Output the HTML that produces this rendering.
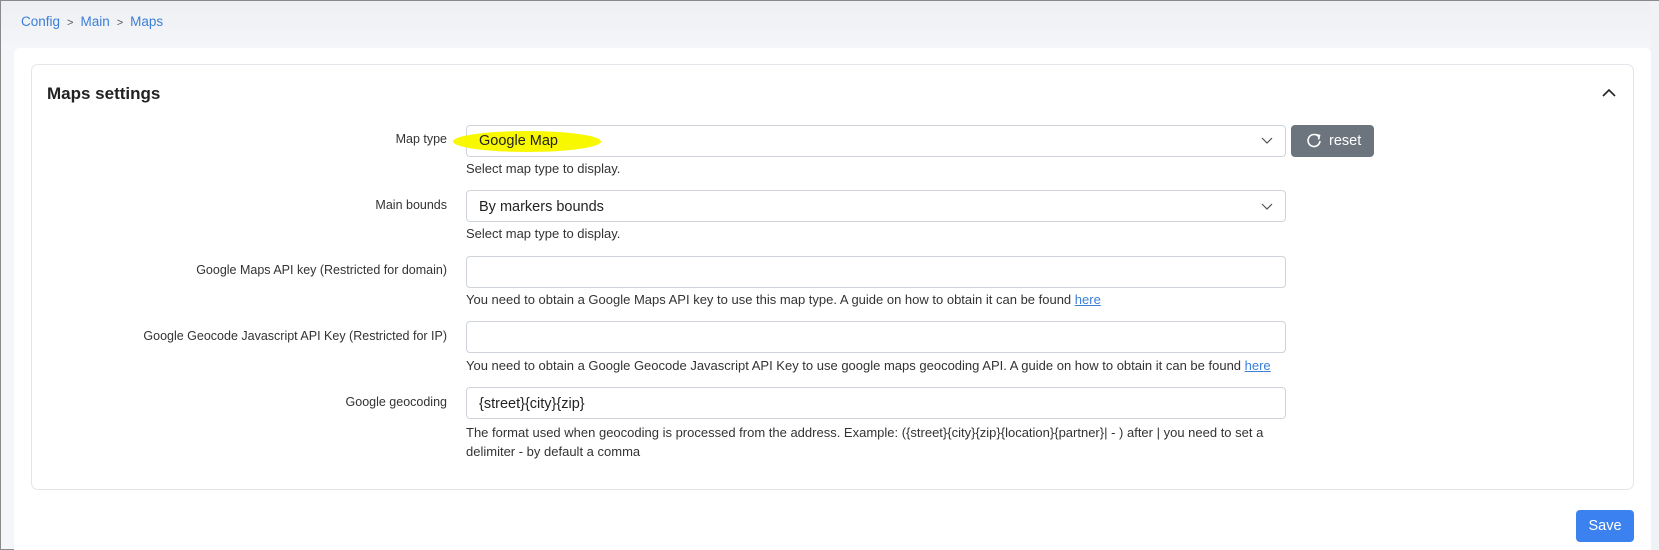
<!DOCTYPE html>
<html><head><meta charset="utf-8"><style>
*{box-sizing:border-box;margin:0;padding:0}
html,body{width:1659px;height:550px;overflow:hidden}
body{font-family:"Liberation Sans",sans-serif;background:linear-gradient(#eeeff3,#f5f6f9 50px);border:1px solid #8a8a8a;position:relative;color:#222}
.bc{position:absolute;left:20px;top:13px;font-size:13.5px;color:#3b7fd9}
.bc span.s{color:#555;margin:0 7px;font-size:11px}
.outer{position:absolute;left:13px;top:47px;width:1637px;height:510px;background:#fff;border-radius:6px}
.strip{position:absolute;left:1650px;top:0;width:8px;height:550px;background:#f1f2f5}
.card{position:absolute;left:30px;top:63px;width:1603px;height:426px;border:1px solid #e3e5ea;border-radius:7px;background:#fff}
.title{position:absolute;left:46px;top:83px;font-size:17px;font-weight:bold;color:#222}
.lbl{position:absolute;right:1211px;font-size:12.5px;color:#333;text-align:right;white-space:nowrap}
.inp{position:absolute;left:465px;width:820px;height:32px;border:1px solid #cfd4db;border-radius:4px;background:#fff;font-size:14.5px;color:#222;padding:8px 12px}
.help{position:absolute;left:465px;font-size:13px;color:#333;white-space:nowrap;line-height:19px}
.help a{color:#3b7fd9;text-decoration:underline}
.reset{position:absolute;left:1290px;top:124px;width:83px;height:32px;background:#6c757d;border-radius:4px;color:#fff;font-size:14.5px;padding:8px 0 0 38px}
.save{position:absolute;left:1575px;top:509px;width:58px;height:32px;background:#3b82f0;border-radius:4px;color:#fff;font-size:14.5px;text-align:center;line-height:32px}
.hl{position:absolute;left:452px;top:130px;width:148px;height:21px;border-radius:50%;background:#f8f800}
</style></head><body>
<div class="bc">Config<span class="s">&gt;</span>Main<span class="s">&gt;</span>Maps</div>
<div class="strip"></div>
<div class="outer"></div>
<div class="card"></div>
<div class="title">Maps settings</div>
<svg style="position:absolute;left:1601px;top:87px" width="14" height="10"><path d="M1 8 L7 2 L13 8" stroke="#222" stroke-width="1.6" fill="none"/></svg>

<div class="lbl" style="top:131px">Map type</div>
<div class="inp" style="top:124px"></div>
<div class="hl"></div>
<div style="position:absolute;left:478px;top:132px;font-size:14.5px;color:#222">Google Map</div>
<svg style="position:absolute;left:1260px;top:136px" width="12" height="8"><path d="M1 1 L6 6 L11 1" stroke="#555" stroke-width="1.2" fill="none"/></svg>
<div class="reset">reset</div>
<svg style="position:absolute;left:1304px;top:131px" width="18" height="18" viewBox="0 0 18 18"><path d="M13.5 4.5 A6 6 0 1 0 15 9" stroke="#fff" stroke-width="1.6" fill="none"/><path d="M10.5 2.5 L14.5 3.5 L13.5 7.5" stroke="#fff" stroke-width="1.6" fill="none"/></svg>
<div class="help" style="top:158px">Select map type to display.</div>

<div class="lbl" style="top:197px">Main bounds</div>
<div class="inp" style="top:189px">By markers bounds</div>
<svg style="position:absolute;left:1260px;top:202px" width="12" height="8"><path d="M1 1 L6 6 L11 1" stroke="#555" stroke-width="1.2" fill="none"/></svg>
<div class="help" style="top:223px">Select map type to display.</div>

<div class="lbl" style="top:262px">Google Maps API key (Restricted for domain)</div>
<div class="inp" style="top:255px"></div>
<div class="help" style="top:289px">You need to obtain a Google Maps API key to use this map type. A guide on how to obtain it can be found <a>here</a></div>

<div class="lbl" style="top:328px">Google Geocode Javascript API Key (Restricted for IP)</div>
<div class="inp" style="top:320px"></div>
<div class="help" style="top:355px">You need to obtain a Google Geocode Javascript API Key to use google maps geocoding API. A guide on how to obtain it can be found <a>here</a></div>

<div class="lbl" style="top:394px">Google geocoding</div>
<div class="inp" style="top:386px">{street}{city}{zip}</div>
<div class="help" style="top:422px">The format used when geocoding is processed from the address. Example: ({street}{city}{zip}{location}{partner}| - ) after | you need to set a<br>delimiter - by default a comma</div>

<div class="save">Save</div>
</body></html>
